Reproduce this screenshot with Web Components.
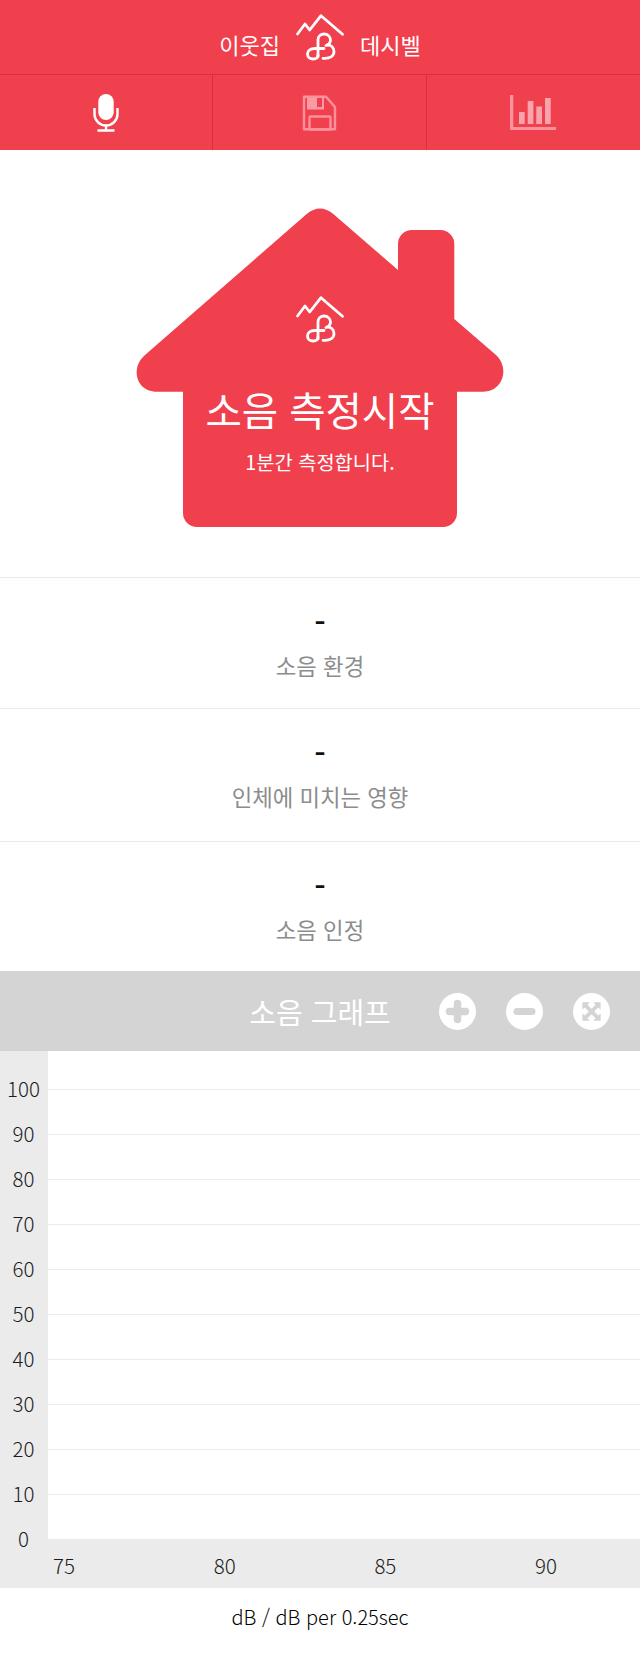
<!DOCTYPE html>
<html lang="ko">
<head>
<meta charset="utf-8">
<title>이웃집 데시벨</title>
<style>
	html, body {
		margin: 0;
		background: #fff;
		font-family: "Noto Sans CJK KR", "Noto Sans", sans-serif;
	}
</style>
</head>
<body>
<noise-app></noise-app>
<script>
const FONT = '"Noto Sans CJK KR", "Noto Sans", sans-serif';

class LogoMark extends HTMLElement {
	constructor() {
		super();
		this._root = this.attachShadow({mode: 'open'});
		this._root.innerHTML = `
			<style>
				:host {
					display: block;
					width: 60px;
					height: 55px;
				}
				svg {
					display: block;
				}
			</style>
			<svg width="60" height="55" viewBox="0 0 60 55" fill="none" stroke="#fff" stroke-width="2.800" stroke-linecap="round" stroke-linejoin="round">
				<polyline points="7.500,24 15,14 19.700,20 31,5.700 52.500,24.300"/>
				<path d="M28 47 V30 C28 26 31 24 34 24 C38 24 40.500 27 40.500 30 C40.500 32.500 38.500 34.500 36 35.500 C41 34 44 37.500 44 41.500 C44 46 40 48.300 35 48.300 H33"/>
				<path d="M34 38.500 H25 C20 38.500 17.500 41 17.500 44 C17.500 47 20 49 23 49 C26 49 28 47.500 28 45"/>
			</svg>`;
	}
}

class TopBar extends HTMLElement {
	constructor() {
		super();
		this._root = this.attachShadow({mode: 'open'});
		this._root.innerHTML = `
			<style>
				:host {
					display: flex;
					justify-content: center;
					align-items: flex-start;
					box-sizing: border-box;
					height: 75px;
					background: #f0404d;
					border-bottom: 1px solid #d5323f;
					color: #fff;
					font-size: 22px;
					gap: 10px;
				}
				logo-mark {
					margin-top: 10px;
				}
				span {
					line-height: 28px;
					margin-top: 30px;
				}
			</style>
			<span>이웃집</span>
			<logo-mark></logo-mark>
			<span>데시벨</span>`;
	}
}

class NavTabs extends HTMLElement {
	constructor() {
		super();
		this._root = this.attachShadow({mode: 'open'});
		this._root.innerHTML = `
			<style>
				:host {
					display: grid;
					grid-template-columns: repeat(3, 1fr);
					height: 75px;
					background: #f0404d;
				}
				div {
					display: flex;
					justify-content: center;
					align-items: center;
					border-right: 1px solid #d5323f;
				}
				div:last-child {
					border-right: 0;
				}
			</style>
			<div>
				<svg width="26" height="38" viewBox="0 0 26 38" fill="none" stroke="#fff" stroke-width="2.400">
					<rect x="5.300" y="0" width="15.400" height="26" rx="7.700" fill="#fff" stroke="none"/>
					<path d="M1.500 14 V20 A11.500 11.500 0 0 0 24.500 20 V14"/>
					<path d="M13 31 V36 M4.500 36.500 H21.500"/>
				</svg>
			</div>
			<div>
				<svg width="36" height="36" viewBox="0 0 36 36" fill="none" stroke="#fa919b" stroke-width="2.400">
					<path d="M3 1.700 H25 L34 12 V34.300 H3 Z" stroke-linejoin="round"/>
					<path d="M6 3 H23 V14.500 H6 Z" fill="#fa9ba4" stroke="none"/>
					<rect x="16" y="3" width="5" height="9" fill="#f0404d" stroke="none"/>
					<rect x="8.500" y="21.500" width="21" height="13" rx="1"/>
				</svg>
			</div>
			<div>
				<svg width="46" height="36" viewBox="0 0 46 36" fill="#fa919b">
					<rect x="0" y="0" width="3.300" height="35"/>
					<rect x="0" y="32" width="46" height="3"/>
					<rect x="9" y="17" width="5.700" height="12" fill="#fba3ab"/>
					<rect x="17.700" y="6" width="5.700" height="23" fill="#fba3ab"/>
					<rect x="26.300" y="11.500" width="5.700" height="17.500" fill="#fba3ab"/>
					<rect x="35" y="3" width="5.700" height="26" fill="#fba3ab"/>
				</svg>
			</div>`;
	}
}

class HouseButton extends HTMLElement {
	constructor() {
		super();
		this._root = this.attachShadow({mode: 'open'});
		this._root.innerHTML = `
			<style>
				:host {
					display: flex;
					justify-content: center;
					box-sizing: border-box;
					height: 428px;
					padding-top: 55px;
					border-bottom: 1px solid #e9e9e9;
				}
				#stack {
					display: grid;
					width: 368px;
					height: 325px;
				}
				#stack > * {
					grid-area: 1 / 1;
				}
				#content {
					display: flex;
					flex-direction: column;
					align-items: center;
					color: #fff;
					padding-top: 86.500px;
				}
				h1 {
					margin: 38px 0 0;
					font-size: 39.500px;
					font-weight: 400;
					line-height: 48px;
				}
				p {
					margin: 15px 0 0;
					font-size: 19.800px;
					font-weight: 400;
					line-height: 28px;
				}
			</style>
			<div id="stack">
				<svg width="368" height="325" viewBox="136 205 368 325">
					<path fill="#f0404d" d="M145 355 L306.700 214 Q320 203 333.300 214 L398 270 V244 A14 14 0 0 1 412 230 H440 A14 14 0 0 1 454.300 244 V319 L496 355 C510 368 503 391.700 483 391.700 H457 V513 A14 14 0 0 1 443 527 H197 A14 14 0 0 1 183 513 V391.700 H157 C136 391.700 130 368 145 355 Z"/>
				</svg>
				<div id="content">
					<logo-mark></logo-mark>
					<h1>소음 측정시작</h1>
					<p>1분간 측정합니다.</p>
				</div>
			</div>`;
	}
}

class ResultRow extends HTMLElement {
	constructor() {
		super();
		this._root = this.attachShadow({mode: 'open'});
		this._root.innerHTML = `
			<style>
				:host {
					display: flex;
					flex-direction: column;
					align-items: center;
					box-sizing: border-box;
					padding-top: 23px;
					border-bottom: 1px solid #e9e9e9;
				}
				:host(:last-of-type) {
					border-bottom: 0;
				}
				#value {
					font-size: 32px;
					line-height: 40px;
					font-weight: 500;
					color: #111;
				}
				#label {
					margin-top: 9px;
					font-size: 22.300px;
					line-height: 30px;
					color: #8c8c8c;
				}
			</style>
			<div id="value"></div>
			<div id="label"><slot></slot></div>`;
	}

	connectedCallback() {
		this._root.querySelector('#value').textContent = this.getAttribute('value');
		this.style.height = this.getAttribute('height') + 'px';
	}
}

class RoundIcon extends HTMLElement {
	constructor() {
		super();
		this._root = this.attachShadow({mode: 'open'});
		let shapes = {
			plus: '<path d="M10.500 18.500 H26.500 M18.500 10.500 V26.500" stroke="#d4d4d4" stroke-width="7.500" stroke-linecap="round" fill="none"/>',
			minus: '<path d="M11 18.500 H26" stroke="#d4d4d4" stroke-width="7" stroke-linecap="round" fill="none"/>',
			expand: '<g fill="#d4d4d4" transform="translate(18.500 18.500) scale(.87) translate(-18.500 -18.500)"><path d="M8 8 H16.500 L13.800 10.700 L18.500 15.400 L23.200 10.700 L20.500 8 H29 V16.500 L26.300 13.800 L21.600 18.500 L26.300 23.200 L29 20.500 V29 H20.500 L23.200 26.300 L18.500 21.600 L13.800 26.300 L16.500 29 H8 V20.500 L10.700 23.200 L15.400 18.500 L10.700 13.800 L8 16.500 Z"/></g>'
		};
		this._root.innerHTML = `
			<style>
				:host {
					display: block;
					width: 37px;
					height: 37px;
				}
				svg {
					display: block;
				}
			</style>
			<svg width="37" height="37" viewBox="0 0 37 37">
				<circle cx="18.500" cy="18.500" r="18.500" fill="#fff"/>
				${shapes[this.getAttribute('shape')]}
			</svg>`;
	}
}

class GraphHeader extends HTMLElement {
	constructor() {
		super();
		this._root = this.attachShadow({mode: 'open'});
		this._root.innerHTML = `
			<style>
				:host {
					display: grid;
					grid-template-columns: 1fr auto 1fr;
					align-items: center;
					height: 80px;
					background: #d4d4d4;
					color: #fff;
				}
				#title {
					grid-column: 2;
					font-size: 29px;
					line-height: 40px;
				}
				#tools {
					grid-column: 3;
					display: flex;
					justify-content: flex-end;
					gap: 30px;
					padding-right: 30px;
				}
			</style>
			<div id="title">소음 그래프</div>
			<div id="tools">
				<round-icon shape="plus"></round-icon>
				<round-icon shape="minus"></round-icon>
				<round-icon shape="expand"></round-icon>
			</div>`;
	}
}

class NoiseChart extends HTMLElement {
	constructor() {
		super();
		this._root = this.attachShadow({mode: 'open'});
		let yLabels = '';
		let gridLines = '';
		for (let i = 100; i >= 0; i -= 10) {
			yLabels += `<span>` + i + `</span>`;
			if (i > 0) {
				gridLines += `<i></i>`;
			}
		}
		let xLabels = '';
		let xValues = [75, 80, 85, 90];
		for (let i = 0; i < xValues.length; i++) {
			xLabels += `<span>` + xValues[i] + `</span>`;
		}
		this._root.innerHTML = `
			<style>
				:host {
					display: block;
					font-size: 20.500px;
					font-weight: 300;
					color: #1c1c1c;
				}
				#top {
					display: flex;
					height: 488px;
				}
				#yaxis {
					flex: none;
					display: flex;
					flex-direction: column;
					width: 48px;
					height: 488px;
					padding: 14.500px 1px 0 0;
					box-sizing: border-box;
					background: #ebebeb;
				}
				#yaxis span {
					flex: none;
					display: block;
					height: 45px;
					line-height: 45px;
					text-align: center;
				}
				#plot {
					flex: 1;
					padding-top: 38px;
				}
				#plot i {
					display: block;
					box-sizing: border-box;
					height: 45px;
					border-top: 1px solid #ebebeb;
				}
				#xaxis {
					display: flex;
					gap: 120.700px;
					height: 49px;
					padding-left: 44px;
					background: #ebebeb;
					line-height: 52px;
				}
				#xaxis span {
					width: 40px;
					text-align: center;
				}
				#caption {
					height: 78px;
					padding-top: 14px;
					box-sizing: border-box;
					text-align: center;
					font-size: 20px;
					line-height: 30px;
					color: #000;
				}
			</style>
			<div id="top">
				<div id="yaxis">${yLabels}</div>
				<div id="plot">${gridLines}</div>
			</div>
			<div id="xaxis">${xLabels}</div>
			<div id="caption">dB / dB per 0.25sec</div>`;
	}
}

class NoiseApp extends HTMLElement {
	constructor() {
		super();
		this._root = this.attachShadow({mode: 'open'});
		this._root.innerHTML = `
			<style>
				:host {
					display: block;
					width: 640px;
					font-family: ${FONT};
				}
			</style>
			<top-bar></top-bar>
			<nav-tabs></nav-tabs>
			<house-button></house-button>
			<result-row value="-" height="131">소음 환경</result-row>
			<result-row value="-" height="133">인체에 미치는 영향</result-row>
			<result-row value="-" height="129">소음 인정</result-row>
			<graph-header></graph-header>
			<noise-chart></noise-chart>`;
	}
}

window.customElements.define('logo-mark', LogoMark);
window.customElements.define('top-bar', TopBar);
window.customElements.define('nav-tabs', NavTabs);
window.customElements.define('house-button', HouseButton);
window.customElements.define('result-row', ResultRow);
window.customElements.define('round-icon', RoundIcon);
window.customElements.define('graph-header', GraphHeader);
window.customElements.define('noise-chart', NoiseChart);
window.customElements.define('noise-app', NoiseApp);
</script>
</body>
</html>
